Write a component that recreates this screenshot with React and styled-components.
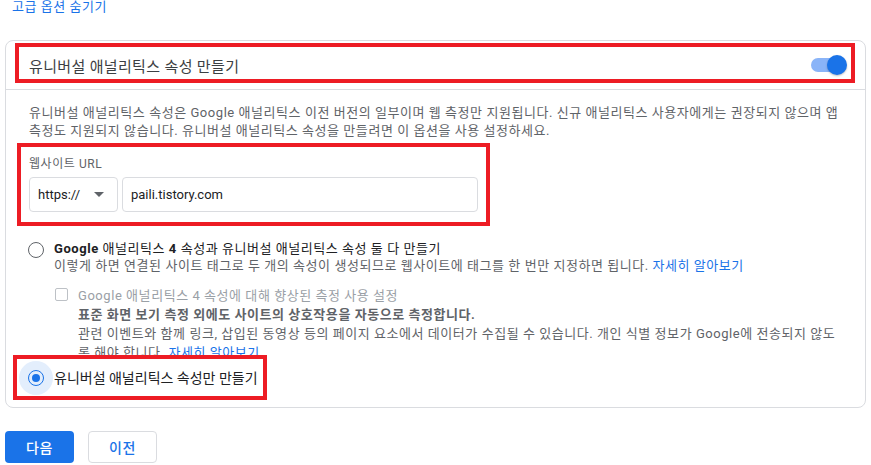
import React from "react";
import styled, { createGlobalStyle } from "styled-components";

const GlobalStyle = createGlobalStyle`
  body {
    margin: 0;
    background: #fff;
    font-family: Roboto, "Noto Sans CJK KR", sans-serif;
    color: #202124;
    letter-spacing: 0.55px;
  }
`;

export default () => {
    return (
        <Page>
            <GlobalStyle />
            <TopLink>고급 옵션 숨기기</TopLink>
            <Card>
                <Header>
                    <HeaderTitle>유니버설 애널리틱스 속성 만들기</HeaderTitle>
                    <Toggle>
                        <ToggleThumb />
                    </Toggle>
                </Header>
                <Body>
                    <Description>
                        유니버설 애널리틱스 속성은 Google 애널리틱스 이전 버전의 일부이며 웹 측정만 지원됩니다. 신규 애널리틱스 사용자에게는 권장되지 않으며 앱
                        측정도 지원되지 않습니다. 유니버설 애널리틱스 속성을 만들려면 이 옵션을 사용 설정하세요.
                    </Description>
                    <FieldLabel>웹사이트 URL</FieldLabel>
                    <UrlRow>
                        <Select>
                            <span>https://</span>
                            <Caret />
                        </Select>
                        <Input>paili.tistory.com</Input>
                    </UrlRow>

                    <RadioRow $top={29}>
                        <Radio />
                        <div>
                            <OptionTitle>
                                <b>Google</b> 애널리틱스 <b>4</b> 속성과 유니버설 애널리틱스 속성 둘 다 만들기
                            </OptionTitle>
                            <OptionHelp>
                                이렇게 하면 연결된 사이트 태그로 두 개의 속성이 생성되므로 웹사이트에 태그를 한 번만 지정하면 됩니다. <Link>자세히 알아보기</Link>
                            </OptionHelp>
                            <CheckRow>
                                <Checkbox />
                                <CheckLabel>Google 애널리틱스 4 속성에 대해 향상된 측정 사용 설정</CheckLabel>
                            </CheckRow>
                            <SubText>
                                <strong>표준 화면 보기 측정 외에도 사이트의 상호작용을 자동으로 측정합니다.</strong>
                                <br />
                                관련 이벤트와 함께 링크, 삽입된 동영상 등의 페이지 요소에서 데이터가 수집될 수 있습니다. 개인 식별 정보가 Google에 전송되지 않도록 해야 합니다. <Link>자세히 알아보기</Link>
                            </SubText>
                        </div>
                    </RadioRow>

                    <RadioRow $top={6}>
                        <Radio $checked />
                        <OptionTitle $big>유니버설 애널리틱스 속성만 만들기</OptionTitle>
                    </RadioRow>
                </Body>
            </Card>
            <Buttons>
                <PrimaryButton>다음</PrimaryButton>
                <OutlineButton>이전</OutlineButton>
            </Buttons>

            {/* red annotation boxes drawn over the screenshot */}
            <Mark $x={15} $y={43} $w={840} $h={40} />
            <Mark $x={17} $y={143} $w={473} $h={83} />
            <Mark $x={13} $y={355} $w={254} $h={45} />
        </Page>
    );
}

const Page = styled.div`
  position: relative;
  padding: 0 5px 20px 5px;
`;

const TopLink = styled.div`
  margin-left: 7px;
  height: 14px;
  line-height: 14px;
  font-size: 13px;
  color: #1a73e8;
  margin-bottom: 26px;
`;

const Card = styled.div`
  border: 1px solid #dadce0;
  border-radius: 8px;
  height: 366px;
`;

const Header = styled.div`
  height: 48px;
  display: flex;
  align-items: center;
  justify-content: space-between;
  padding: 0 18px 0 23px;
  border-bottom: 1px solid #dadce0;
`;

const HeaderTitle = styled.div`
  font-size: 15px;
  letter-spacing: 0.35px;
  color: #3c4043;
`;

const Toggle = styled.div`
  position: relative;
  width: 34px;
  height: 14px;
  border-radius: 7px;
  background: #8ab4f8;
  margin-right: 2px;
`;

const ToggleThumb = styled.div`
  position: absolute;
  right: -2px;
  top: -3px;
  width: 20px;
  height: 20px;
  border-radius: 50%;
  background: #1a73e8;
  box-shadow: 0 1px 2px rgba(0, 0, 0, 0.25);
`;

const Body = styled.div`
  padding: 14px 20px 0 23px;
`;

const Description = styled.div`
  font-size: 13px;
  line-height: 18px;
  color: #5f6368;
`;

const FieldLabel = styled.div`
  margin-top: 16px;
  font-size: 12px;
  line-height: 16px;
  color: #5f6368;
`;

const UrlRow = styled.div`
  display: flex;
  gap: 4px;
  margin-top: 5px;
  letter-spacing: 0;
`;

const Select = styled.div`
  box-sizing: border-box;
  width: 89px;
  height: 35px;
  border: 1px solid #dadce0;
  border-radius: 4px;
  display: flex;
  align-items: center;
  justify-content: space-between;
  padding: 0 13px 0 8px;
  font-size: 13px;
  color: #202124;
`;

const Caret = styled.div`
  width: 0;
  height: 0;
  border-left: 5px solid transparent;
  border-right: 5px solid transparent;
  border-top: 5px solid #5f6368;
`;

const Input = styled.div`
  box-sizing: border-box;
  width: 356px;
  height: 35px;
  border: 1px solid #dadce0;
  border-radius: 4px;
  display: flex;
  align-items: center;
  padding: 0 8px;
  font-size: 13px;
  color: #202124;
`;

const RadioRow = styled.div`
  display: flex;
  align-items: flex-start;
  gap: 10px;
  margin-top: ${p => p.$top}px;
`;

const Radio = styled.div`
  position: relative;
  flex: none;
  box-sizing: border-box;
  width: 16px;
  height: 16px;
  margin-top: 1px;
  margin-left: -1px;
  border-radius: 50%;
  border: 1.5px solid ${p => (p.$checked ? "#1a73e8" : "#5f6368")};
  ${p => p.$checked && `
    margin-top: 2px;
    &::before {
      content: "";
      position: absolute;
      left: 50%;
      top: 50%;
      width: 34px;
      height: 34px;
      margin: -17px 0 0 -17px;
      border-radius: 50%;
      background: rgba(26, 115, 232, 0.12);
    }
    &::after {
      content: "";
      position: absolute;
      left: 2.5px;
      top: 2.5px;
      width: 8px;
      height: 8px;
      border-radius: 50%;
      background: #1a73e8;
    }
  `}
`;

const OptionTitle = styled.div`
  font-size: ${p => (p.$big ? 14 : 13)}px;
  line-height: ${p => (p.$big ? 20 : 16)}px;
  letter-spacing: ${p => (p.$big ? 0 : 0.55)}px;
  color: #202124;
  position: relative;
  b {
    font-weight: 700;
  }
`;

const OptionHelp = styled.div`
  font-size: 13px;
  line-height: 16px;
  margin-top: 1px;
  color: #5f6368;
`;

const Link = styled.a`
  color: #1a73e8;
  text-decoration: none;
`;

const CheckRow = styled.div`
  display: flex;
  align-items: center;
  gap: 10px;
  height: 20px;
  margin-top: 10px;
`;

const Checkbox = styled.div`
  box-sizing: border-box;
  width: 13px;
  height: 13px;
  border: 1px solid #bdc1c6;
  border-radius: 2px;
  margin-left: 1px;
`;

const CheckLabel = styled.div`
  font-size: 13px;
  color: #9aa0a6;
`;

const SubText = styled.div`
  margin-left: 24px;
  margin-top: 1px;
  font-size: 13px;
  line-height: 19px;
  color: #5f6368;
  strong {
    font-weight: 700;
  }
`;

const Buttons = styled.div`
  display: flex;
  gap: 14px;
  margin-top: 23px;
`;

const PrimaryButton = styled.div`
  box-sizing: border-box;
  width: 69px;
  height: 32px;
  border-radius: 4px;
  background: #1a73e8;
  color: #fff;
  font-size: 14px;
  font-weight: 500;
  display: flex;
  align-items: center;
  justify-content: center;
`;

const OutlineButton = styled(PrimaryButton)`
  background: #fff;
  border: 1px solid #dadce0;
  color: #1a73e8;
`;

const Mark = styled.div`
  position: absolute;
  box-sizing: border-box;
  left: ${p => p.$x}px;
  top: ${p => p.$y}px;
  width: ${p => p.$w}px;
  height: ${p => p.$h}px;
  border: 4px solid #ed1c24;
  pointer-events: none;
`;
